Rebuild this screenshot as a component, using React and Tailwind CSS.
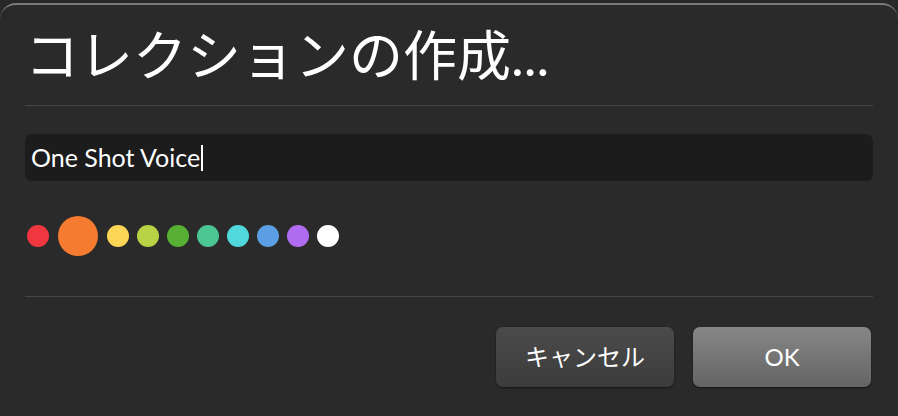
import React from 'react';

const colors = [
  { c: 'bg-[#f0373f]', big: false },
  { c: 'bg-[#f47b30]', big: true },
  { c: 'bg-[#fdd658]', big: false },
  { c: 'bg-[#b8d444]', big: false },
  { c: 'bg-[#57b033]', big: false },
  { c: 'bg-[#4cc592]', big: false },
  { c: 'bg-[#50d9dd]', big: false },
  { c: 'bg-[#5c9ee3]', big: false },
  { c: 'bg-[#b06cf0]', big: false },
  { c: 'bg-white', big: false },
];

const font = { fontFamily: 'Lato, "Noto Sans CJK JP", sans-serif' };

export default function App() {
  return (
    <div className="w-[898px] h-[416px] bg-[#282828] overflow-hidden" style={font}>
      <div className="mt-[3px] h-[413px] border-t-2 border-[#7b7b7b] rounded-t-[16px] bg-[#2a2a2a] px-[25px] flex flex-col">
        {/* Title */}
        <div className="h-[100px] flex items-center pt-[2px]">
          <h1 className="text-[54px] leading-none text-white">コレクションの作成...</h1>
        </div>
        <div className="h-px bg-[#454545]" />

        {/* Name input */}
        <div className="mt-[28px] h-[47px] rounded-[7px] bg-[#1c1c1c] flex items-center px-[6px]">
          <span className="text-[25px] text-white">One Shot Voice</span>
          <span className="w-[2px] h-[26px] bg-white ml-px" />
        </div>

        {/* Colour dots */}
        <div className="mt-[35px] h-[40px] flex items-center gap-[8px] pl-[2px]">
          {colors.map((d, i) => (
            <span
              key={i}
              className={`rounded-full ${d.c} ${d.big ? 'w-[40px] h-[40px] mx-px' : 'w-[22px] h-[22px]'}`}
            />
          ))}
        </div>

        <div className="mt-[40px] h-px bg-[#454545]" />

        {/* Buttons */}
        <div className="mt-[30px] flex justify-end gap-[19px] pr-[2px]">
          <button className="w-[178px] h-[60px] rounded-[7px] bg-gradient-to-b from-[#4b4b4b] to-[#3c3c3c] shadow-[0_1px_2px_rgba(0,0,0,0.5)] text-white text-[24px]">
            キャンセル
          </button>
          <button className="w-[178px] h-[60px] rounded-[7px] bg-gradient-to-b from-[#878787] to-[#646464] shadow-[0_1px_2px_rgba(0,0,0,0.5)] text-white text-[24px]">
            OK
          </button>
        </div>
      </div>
    </div>
  );
}
